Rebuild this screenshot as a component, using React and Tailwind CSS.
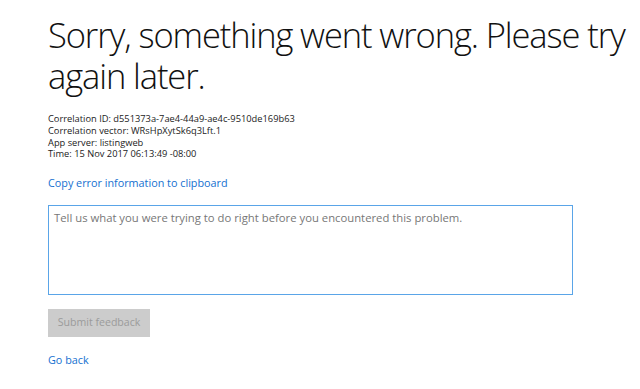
import React from "react";

export default function App() {
  return (
    <div className="min-h-screen bg-white pl-[48px] pr-4 pt-[14px] text-black" style={{ fontFamily: '"Open Sans", "Noto Sans", sans-serif' }}>
      <h1 className="w-[590px] text-[34.5px] font-light leading-[41px] tracking-[-1.1px] text-[#111]">
        Sorry, something went wrong. Please try again later.
      </h1>

      <div className="mt-[17px] text-[9.3px] leading-[11.8px] text-[#222]">
        <div>Correlation ID: d551373a-7ae4-44a9-ae4c-9510de169b63</div>
        <div>Correlation vector: WRsHpXytSk6q3Lft.1</div>
        <div>App server: listingweb</div>
        <div>Time: 15 Nov 2017 06:13:49 -08:00</div>
      </div>

      <div className="mt-[9px]">
        <a href="#" className="text-[10.8px] text-[#1470d0]">Copy error information to clipboard</a>
      </div>

      <textarea
        className="mt-[12px] block h-[90px] w-[525px] resize-none border border-[#5aa5e8] px-[5px] py-[4px] text-[11.3px] text-[#333] outline-none placeholder:text-[#777]"
        placeholder="Tell us what you were trying to do right before you encountered this problem."
      />

      <button
        disabled
        className="mt-[14px] h-[28px] w-[102px] bg-[#cccccc] text-[10.6px] text-[#9b9b9b]"
      >
        Submit feedback
      </button>

      <div className="mt-[9px]">
        <a href="#" className="text-[10.8px] text-[#1470d0]">Go back</a>
      </div>
    </div>
  );
}
